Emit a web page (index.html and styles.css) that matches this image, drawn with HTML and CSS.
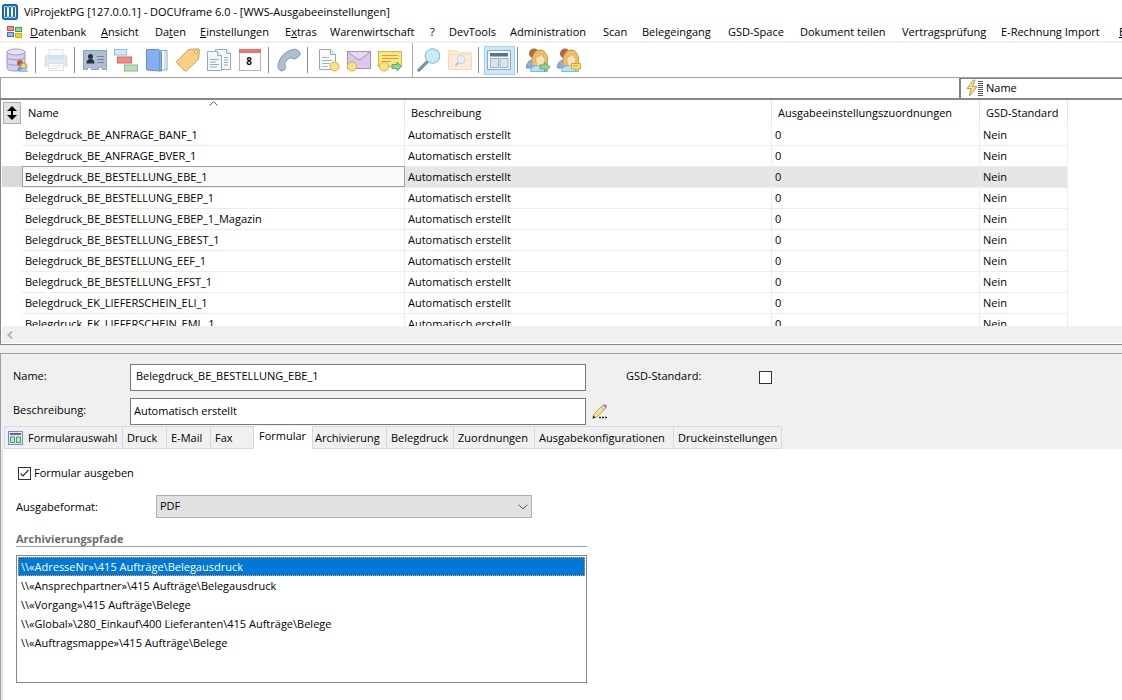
FILE: index.html
```html
<!DOCTYPE html>
<html lang="de">
<head>
<meta charset="utf-8">
<title>ViProjektPG [127.0.0.1] - DOCUframe 6.0 - [WWS-Ausgabeeinstellungen]</title>
<link rel="stylesheet" href="styles.css">
</head>
<body>
<header class="titlebar">
  <svg class="icon16" viewBox="0 0 16 16"><rect x=".5" y=".5" width="15" height="15" rx="2" fill="#1673b8" stroke="#0d5f9e"/><g fill="#1673b8" stroke="#fff" stroke-width="1"><rect x="2.500" y="2.500" width="3" height="11" rx="1"/><rect x="6.500" y="2.500" width="3" height="11" rx="1"/><rect x="10.500" y="2.500" width="3" height="11" rx="1"/></g></svg>
  <h1 class="title">ViProjektPG [127.0.0.1] - DOCUframe 6.0 - [WWS-Ausgabeeinstellungen]</h1>
</header>

<nav class="menubar">
  <svg class="icon16" viewBox="0 0 16 14"><rect x=".5" y="1.500" width="6" height="4" fill="#f58b8b" stroke="#d94a4a"/><rect x="8.500" y="2.500" width="6" height="4" fill="#8fd6a0" stroke="#35a552"/><rect x=".5" y="7.500" width="6" height="4" fill="#8db8f5" stroke="#3b76d0"/><rect x="8.500" y="8.500" width="6" height="4" fill="#f2d50c" stroke="#d1b000"/></svg>
  <a href="#"><u>D</u>atenbank</a><a href="#"><u>A</u>nsicht</a><a href="#">Da<u>t</u>en</a><a href="#"><u>E</u>instellungen</a><a href="#">E<u>x</u>tras</a><a href="#">Warenwirtschaft</a><a href="#">?</a><a href="#">DevTools</a><a href="#">Administration</a><a href="#">Scan</a><a href="#">Belegeingang</a><a href="#">GSD-Space</a><a href="#">Dokument teilen</a><a href="#">Vertragsprüfung</a><a href="#">E-Rechnung Import</a><a href="#"><u>E</u></a>
</nav>

<div class="toolbar" role="toolbar" aria-label="Werkzeuge">
  <button class="tool" aria-label="Datenbank"><svg viewBox="0 0 24 24"><path d="M2 4v16c0 2 4 3 9 3s9-1 9-3V4z" fill="#d9cfec" stroke="#a594c8"/><ellipse cx="11" cy="4" rx="9" ry="3" fill="#e8e1f5" stroke="#a594c8"/><path d="M2 9.500c1 3 17 3 18 0M2 15c1 3 17 3 18 0" fill="none" stroke="#a594c8"/><circle cx="15" cy="15" r="3" fill="#a5683c"/><path d="M12 23c0-5 5-6 6-3l-1 3z" fill="#6da0e8"/><path d="M15 20c-1-7 8-7 7 0z" fill="#e2ae45" stroke="#b98a35" stroke-width=".6"/><circle cx="18.500" cy="18" r="2" fill="#f5d3a0"/><path d="M14.500 23.500c0-4 8-4 8 0z" fill="#9bd0f5" stroke="#6ea8d8" stroke-width=".6"/></svg></button>
  <span class="sep"></span>
  <button class="tool" aria-label="Drucken" disabled><svg viewBox="0 0 24 24"><path d="M5 1.500h14v7H5z" fill="#f7f9fb" stroke="#dfe4ea"/><path d="M1 10q0-2.500 2.500-2.500h17Q23 7.500 23 10v8H1z" fill="#e3e8ee" stroke="#d5dce4"/><path d="M4.500 7.500h15V12h-15z" fill="#cfe4f6"/><path d="M4.500 15.500h15v7h-15z" fill="#fafbfc" stroke="#dbe1e8"/><path d="M7 18h10M7 20.500h7" stroke="#dfe4ea"/></svg></button>
  <span class="sep"></span>
  <button class="tool" aria-label="Adressen"><svg viewBox="0 0 24 24"><path d="M.5 2.500h23v19h-4q0-2.500-2-2.500t-2 2.500h-7q0-2.500-2-2.500t-2 2.500h-4z" fill="#aebfd3" stroke="#8ea3bb"/><circle cx="7.500" cy="8.500" r="2.500" fill="#25323f"/><path d="M3.500 15.500q0-4.500 4-4.500t4 4.500z" fill="#25323f"/><path d="M14 8.500h7M14 11.500h7M14 14.500h7" stroke="#71869e"/></svg></button>
  <button class="tool" aria-label="Vorgänge"><svg viewBox="0 0 24 24"><rect x=".5" y="1.500" width="12" height="5.500" fill="#ccecfc" stroke="#8cbfe0"/><rect x="3.500" y="9" width="14" height="6" fill="#f58888" stroke="#d86565"/><rect x="10.500" y="17" width="13" height="6" fill="#b5e0bd" stroke="#83bb8f"/></svg></button>
  <button class="tool" aria-label="Mappe"><svg viewBox="0 0 24 24"><path d="M12 2.500h10v19.500H15z" fill="#fff" stroke="#8da5c8"/><path d="M20 3v19" stroke="#b4c2d6"/><path d="M1.500 1.500h12l3 2.500v19H15L1.500 22z" fill="#83b0ee" stroke="#5d8ed4"/><path d="M14.500 2v21" stroke="#6797dc"/></svg></button>
  <button class="tool" aria-label="Artikel"><svg viewBox="0 0 24 24"><path d="M12.500 1.500 22 .8q1.500 0 1.500 1.500l-1 9-12 11.500q-1 .7-2-.3L.9 15q-.8-1 .2-2z" fill="#f9ce85" stroke="#cfa052"/><circle cx="20" cy="4" r="1.500" fill="#fff" stroke="#cfa052"/></svg></button>
  <button class="tool" aria-label="Dokumente"><svg viewBox="0 0 24 24"><g fill="#f4f8fb" stroke="#94abc1"><path d="M8.500 1.500h11l4 4v16h-15z"/><path d="M19.500 1.500v4h4M17 9.500h4M17 12h4M17 14.500h4M17 17h4"/><path d="M.5 3.500h10l4 4v15H.5z"/><path d="M10.500 3.500v4h4"/></g><path d="M3 11.500h9M3 14h6M3 16.500h9M3 19h7" stroke="#94abc1"/></svg></button>
  <button class="tool" aria-label="Kalender"><svg viewBox="0 0 24 24"><rect x="1.500" y="1.500" width="21" height="21" fill="#fdfdfd" stroke="#aab6c2"/><path d="M1 1h22v4H1z" fill="#fa6d6d"/><text class="day" x="11" y="17" text-anchor="middle">8</text></svg></button>
  <span class="sep"></span>
  <button class="tool" aria-label="Telefon"><svg viewBox="0 0 24 24"><path d="M17.500 1.200q-7 1.300-11 5.300Q2 11 1 17q-.5 4 2 5.500 2.300 1 4.500-.8 2-2 .5-4.200-1.200-2 1.500-5 3-3.300 5-2.500 2.500 1.700 4.500.5 2.500-1.500 4-3.700.8-2-1.500-4-2-1.600-4-1.600z" fill="#aebfd3" stroke="#8499b1"/></svg></button>
  <span class="sep"></span>
  <button class="tool" aria-label="Neues Dokument"><svg viewBox="0 0 24 24"><path d="M3.500 1.500h11l5 5v15h-16z" fill="#f8fafc" stroke="#94a8bd"/><path d="M14.500 1.500v5h5" fill="#e3ebf3" stroke="#94a8bd"/><path d="M6 9.500h7M6 12.500h10M6 15.500h8M6 18.500h6" stroke="#a5b5c5"/><circle cx="18.500" cy="18.500" r="4.500" fill="#fbe383" stroke="#d3b24a"/></svg></button>
  <button class="tool" aria-label="Neue E-Mail"><svg viewBox="0 0 24 24"><rect x=".5" y="3.500" width="23" height="17" fill="#d8c9ed" stroke="#a58fc8"/><path d="m1 4 9 7q2 1.500 4 0l9-7" fill="#e4d9f3" stroke="#a58fc8"/><circle cx="5" cy="18.500" r="4.500" fill="#fbe383" stroke="#d3b24a"/></svg></button>
  <button class="tool" aria-label="Neue Notiz"><svg viewBox="0 0 24 24"><rect x=".5" y="3.500" width="23" height="15" fill="#fbe67f" stroke="#d3b24a"/><path d="M4 7.500h16M4 10.500h16M4 13.500h9" stroke="#c5a43f"/><circle cx="6" cy="18.500" r="4.500" fill="#fbe383" stroke="#d3b24a"/><path d="M14 16.500h5V14l4.500 4.500L19 23v-2.500h-5z" fill="#8fd19b" stroke="#62a871"/></svg></button>
  <span class="divider"></span>
  <button class="tool" aria-label="Suchen"><svg viewBox="0 0 24 24"><path d="m1 23 10-10" stroke="#647b94" stroke-width="3"/><path d="m2 22 9-9" stroke="#96acc3"/><circle cx="15.500" cy="8" r="7.300" fill="#c6e9fb" stroke="#8facc8"/></svg></button>
  <button class="tool" aria-label="Ordnersuche" disabled><svg viewBox="0 0 24 24"><path d="M.5 2.500h8l1.500 2h13.500v17H.5z" fill="#fdecd3" stroke="#f4dcb8"/><path d="M.5 6.500h23" stroke="#f4dcb8"/><path d="m7.500 17.500 4-4" stroke="#b6c3d0" stroke-width="2"/><circle cx="13" cy="11.500" r="4" fill="#dff2fd" stroke="#c0d8ec"/></svg></button>
  <span class="sep"></span>
  <button class="tool active" aria-label="Formularansicht" aria-pressed="true"><svg viewBox="0 0 24 24"><rect x=".5" y="2.500" width="23" height="19" fill="#f6fafd" stroke="#8fa7bf"/><path d="M3 5h18v3.500H3z" fill="#58728d"/><g fill="#dce5ee" stroke="#9eb1c4"><rect x="3.500" y="10.500" width="8" height="9"/><rect x="13" y="10.500" width="8" height="9"/></g></svg></button>
  <span class="sep"></span>
  <button class="tool" aria-label="Benutzer wechseln"><svg viewBox="0 0 24 24"><circle cx="8" cy="5.500" r="5" fill="#a96a4a"/><path d="M.5 20c0-7 4-8 8-8l3 8z" fill="#81b1f0" stroke="#5e90d6"/><path d="M6 18C5 9 8 2 14 2s9 7 7 16z" fill="#efbd62" stroke="#c9973f"/><path d="M4.500 23.500c0-4 3-6 9-6s8 2 8 6z" fill="#b5e2fa" stroke="#7fb8de"/><path d="M10 9q3 0 6-3 0 3 3 4 0 8-5 8t-4-9z" fill="#fae0bc" stroke="#d5a55c" stroke-width=".7"/><path d="M14 17h4.500v-2.500L24 19l-5.500 4.500V21H14z" fill="#8fd19b" stroke="#62a871"/></svg></button>
  <button class="tool" aria-label="Benutzernotiz"><svg viewBox="0 0 24 24"><circle cx="8" cy="5.500" r="5" fill="#a96a4a"/><path d="M.5 20c0-7 4-8 8-8l3 8z" fill="#81b1f0" stroke="#5e90d6"/><path d="M6 18C5 9 8 2 14 2s9 7 7 16z" fill="#efbd62" stroke="#c9973f"/><path d="M4.500 23.500c0-4 3-6 9-6s8 2 8 6z" fill="#b5e2fa" stroke="#7fb8de"/><path d="M10 9q3 0 6-3 0 3 3 4 0 8-5 8t-4-9z" fill="#fae0bc" stroke="#d5a55c" stroke-width=".7"/><path d="M14.500 15.500h9V21h-3l-2 2v-2h-4z" fill="#fbe06a" stroke="#c9a83d"/><path d="M16.500 18h5" stroke="#c9a83d"/></svg></button>
</div>

<div class="filterbar">
  <input class="filter-input" type="text" aria-label="Filter">
  <button class="filter-field"><svg class="bolt" viewBox="0 0 18 18"><path d="M7.500 1 1 9.500h4L3.500 17 11 7.500H6.500L9 1z" fill="#f7df8d" stroke="#c59b45"/><path d="M12 2.500h5M12 4.500h5M12 6.500h5M12 8.500h5M12 10.500h5M12 12.500h5M12 14.500h5M12 16.500h5" stroke="#555"/></svg>Name</button>
</div>

<main class="workspace">
  <section class="list-pane" aria-label="Ausgabeeinstellungen">
    <div class="list-view">
      <table class="grid">
        <colgroup><col class="c-mark"><col class="c-name"><col class="c-desc"><col class="c-assign"><col class="c-std"><col></colgroup>
        <thead><tr>
          <th class="mark"><button class="sizer" aria-label="Spaltenauswahl"><svg viewBox="0 0 12 14"><path d="M6 0 1 5h4v4H1l5 5 5-5H7V5h4z"/></svg></button></th>
          <th class="sorted">Name<svg class="sort" viewBox="0 0 9 5"><path d="M.5 4.500 4.500.7l4 3.800" fill="none" stroke="#555"/></svg></th><th>Beschreibung</th><th>Ausgabeeinstellungszuordnungen</th><th>GSD-Standard</th><th class="rest"></th>
        </tr></thead>
        <tbody>
          <tr><td></td><td>Belegdruck_BE_ANFRAGE_BANF_1</td><td>Automatisch erstellt</td><td>0</td><td>Nein</td><td></td></tr>
          <tr><td></td><td>Belegdruck_BE_ANFRAGE_BVER_1</td><td>Automatisch erstellt</td><td>0</td><td>Nein</td><td></td></tr>
          <tr class="selected"><td></td><td>Belegdruck_BE_BESTELLUNG_EBE_1</td><td>Automatisch erstellt</td><td>0</td><td>Nein</td><td></td></tr>
          <tr><td></td><td>Belegdruck_BE_BESTELLUNG_EBEP_1</td><td>Automatisch erstellt</td><td>0</td><td>Nein</td><td></td></tr>
          <tr><td></td><td>Belegdruck_BE_BESTELLUNG_EBEP_1_Magazin</td><td>Automatisch erstellt</td><td>0</td><td>Nein</td><td></td></tr>
          <tr><td></td><td>Belegdruck_BE_BESTELLUNG_EBEST_1</td><td>Automatisch erstellt</td><td>0</td><td>Nein</td><td></td></tr>
          <tr><td></td><td>Belegdruck_BE_BESTELLUNG_EEF_1</td><td>Automatisch erstellt</td><td>0</td><td>Nein</td><td></td></tr>
          <tr><td></td><td>Belegdruck_BE_BESTELLUNG_EFST_1</td><td>Automatisch erstellt</td><td>0</td><td>Nein</td><td></td></tr>
          <tr><td></td><td>Belegdruck_EK_LIEFERSCHEIN_ELI_1</td><td>Automatisch erstellt</td><td>0</td><td>Nein</td><td></td></tr>
          <tr><td></td><td>Belegdruck_EK_LIEFERSCHEIN_EML_1</td><td>Automatisch erstellt</td><td>0</td><td>Nein</td><td></td></tr>
        </tbody>
      </table>
    </div>
    <div class="hscroll"><button class="scroll-left" aria-label="Nach links"><svg viewBox="0 0 8 8"><path d="M6 .5 2.500 4 6 7.500" fill="none" stroke="#b5b5b5" stroke-width="2"/></svg></button></div>
  </section>

  <section class="detail">
    <div class="fields">
      <label for="name">Name:</label>
      <input class="field-name" id="name" type="text" value="Belegdruck_BE_BESTELLUNG_EBE_1">
      <label class="std-label" for="std">GSD-Standard:</label>
      <input class="check" id="std" type="checkbox">
      <label for="desc">Beschreibung:</label>
      <input id="desc" type="text" value="Automatisch erstellt">
      <button class="edit" aria-label="Bearbeiten"><svg viewBox="0 0 16 16"><path d="m1 14 1-4 8.500-8.500 3 3L5 13z" fill="#f8e08a" stroke="#b89445" stroke-width=".8"/><path d="m9 3 2-2 3 3-2 2z" fill="#c8d8e8" stroke="#8597a8" stroke-width=".6"/><path d="m11 1 1-.7q3 0 3 3L14 4z" fill="#e86e6e"/><path d="m.5 14.500.7-3 2.300 2.300z" fill="#222"/><path d="M7 13.500h2M10 13.500h2M13 13.500h2" stroke="#222" stroke-width="1.500"/></svg></button>
    </div>

    <div class="tabs" role="tablist">
      <button class="tab with-icon" role="tab"><svg viewBox="0 0 15 14"><rect x=".5" y=".5" width="14" height="13" fill="#d8e9fb" stroke="#5f94cf"/><path d="M2 2h11v2H2z" fill="#7d5c9c"/><path d="M2.500 6h4v5.500h-4zM8.500 6h4v5.500h-4z" fill="#bfe5c4" stroke="#4c9b62"/></svg>Formularauswahl</button><button class="tab" role="tab">Druck</button><button class="tab" role="tab">E-Mail</button><button class="tab" role="tab">Fax</button><button class="tab current" role="tab" aria-selected="true">Formular</button><button class="tab" role="tab">Archivierung</button><button class="tab" role="tab">Belegdruck</button><button class="tab" role="tab">Zuordnungen</button><button class="tab" role="tab">Ausgabekonfigurationen</button><button class="tab" role="tab">Druckeinstellungen</button>
    </div>

    <div class="page" role="tabpanel">
      <label class="output"><input class="check" type="checkbox" checked>Formular ausgeben</label>
      <div class="format-row">
        <label for="format">Ausgabeformat:</label>
        <div class="select-box"><select id="format"><option>PDF</option></select><svg class="chevron" viewBox="0 0 10 6"><path d="m.7.700 4.300 4.300L9.300.700" fill="none" stroke="#555"/></svg></div>
      </div>
      <h2 class="group">Archivierungspfade</h2>
      <ul class="paths" role="listbox" aria-label="Archivierungspfade">
        <li class="chosen" role="option" aria-selected="true">\\«AdresseNr»\415 Aufträge\Belegausdruck</li>
        <li role="option">\\«Ansprechpartner»\415 Aufträge\Belegausdruck</li>
        <li role="option">\\«Vorgang»\415 Aufträge\Belege</li>
        <li role="option">\\«Global»\280_Einkauf\400 Lieferanten\415 Aufträge\Belege</li>
        <li role="option">\\«Auftragsmappe»\415 Aufträge\Belege</li>
      </ul>
    </div>
  </section>
</main>
</body>
</html>
```
FILE: styles.css
```css
* { box-sizing: border-box; }
body {
  margin: 0;
  height: 100vh;
  display: flex;
  flex-direction: column;
  overflow: hidden;
  background: #fff;
  color: #000;
  font: 11px/16px "Open Sans", "Noto Sans", sans-serif;
}
button, input, select { font: inherit; color: inherit; margin: 0; border-radius: 0; }
button { padding: 0; border: 0; background: none; }
svg { display: block; flex: none; }
.icon16 { width: 16px; }

.titlebar { display: flex; align-items: center; gap: 6px; height: 22px; padding: 1px 0 0 2px; flex: none; }
.title { margin: 0; font-size: 11px; font-weight: 400; }

.menubar {
  display: grid;
  grid-template-columns: 23px 71px 54px 45px 85px 45px 100px 19px 61px 93px 39px 86px 72px 102px 99px 118px 20px;
  align-items: center;
  height: 21px;
  padding: 1px 0 0 7px;
  border-bottom: 2px solid #f0f0f0;
  flex: none;
  white-space: nowrap;
}
.menubar a { color: inherit; text-decoration: none; }

.toolbar { display: flex; align-items: center; height: 34px; padding-left: 2px; flex: none; }
.tool { width: 31px; height: 29px; display: grid; place-items: center start; padding-left: 2px; border: 1px solid transparent; flex: none; }
.tool svg { width: 24px; height: 24px; }
.tool.active { background: #cce8ff; border-color: #99d1ff; }
.sep { width: 1px; height: 26px; margin: 0 5px 0 2px; background: #8a8a8a; flex: none; }
.divider { width: 1px; height: 34px; margin: 0 1px 0 6px; background: #a8a8a8; flex: none; }
.day { font: 700 10px "Open Sans", sans-serif; fill: #111; }

.filterbar { display: flex; height: 23px; border-top: 1px solid #a0a0a0; border-bottom: 2px solid #85878c; flex: none; }
.filter-input { flex: 1; min-width: 0; border: 0; border-left: 1px solid #a0a0a0; outline: 0; }
.filter-field { display: flex; align-items: center; gap: 2px; width: 163px; padding: 0 0 2px 5px; border-left: 2px solid #828282; border-top: 1px solid #828282; flex: none; }
.bolt { width: 18px; height: 18px; }

.workspace { flex: 1; min-height: 0; display: flex; flex-direction: column; gap: 8px; background: #f0f0f0; }
.list-pane { height: 35vh; display: flex; flex-direction: column; background: #fff; border-left: 1px solid #828790; border-bottom: 1px solid #828790; padding: 0 0 1px 1px; flex: none; }
.list-view { flex: 1; min-height: 0; overflow: hidden; }
.grid { width: 100%; table-layout: fixed; border-collapse: separate; border-spacing: 0; }
.c-mark { width: 20px; }
.c-name { width: 383px; }
.c-desc { width: 367px; }
.c-assign { width: 208px; }
.c-std { width: 88px; }
.grid th { height: 24px; padding: 1px 0 0 6px; font-weight: 400; text-align: left; border-right: 1px solid #e5e5e5; white-space: nowrap; }
.grid .mark { padding: 0; border: 0; }
.grid .rest { border: 0; }
.sorted { position: relative; }
.sort { position: absolute; left: 49%; top: 1px; width: 9px; height: 5px; }
.sizer { display: grid; place-items: center; width: 18px; height: 22px; margin: 1px 0 0 1px; background: #e1e1e1; border: 1px solid #adadad; }
.sizer svg { width: 12px; height: 14px; }
.grid td { height: 21px; padding: 0 0 0 3px; border-right: 1px solid #ededed; border-top: 1px solid #ededed; white-space: nowrap; line-height: 18px; }
.grid td:first-child, .grid td:last-child { border-color: transparent; }
.grid td:first-child { border-right: 0; }
.grid tbody tr:first-child td { border-top-color: transparent; }
.selected td { background: #e6e6e6; }
.selected td:first-child { background: #d9d9d9; }
.grid .selected td:nth-child(2) { background: #f9f9f9; border: 1px solid #a0a0a0; padding-left: 2px; }
.grid .selected td:last-child { background: none; }
.hscroll { display: flex; align-items: center; height: 17px; background: #f0f0f0; flex: none; }
.scroll-left { width: 15px; display: grid; place-items: center; }
.scroll-left svg { width: 8px; height: 8px; }

.detail { flex: 1; min-height: 0; display: flex; flex-direction: column; border-left: 1px solid #a0a0a0; border-top: 1px solid #a0a0a0; }
.fields {
  display: grid;
  grid-template-columns: 117px 456px 40px 133px 1fr;
  row-gap: 7px;
  align-items: center;
  padding: 10px 0 1px 12px;
}
.fields label { padding-bottom: 3px; }
.fields input[type="text"] { width: 100%; height: 27px; padding: 0 3px 3px; border: 1px solid #7a7a7a; background: #fff; outline: 0; }
.fields input.field-name { padding: 0 5px 5px; }
.fields .std-label { grid-column: 4; }
.edit { margin-left: 6px; justify-self: start; }
.edit svg { width: 16px; height: 16px; }
.check { appearance: none; width: 13px; height: 13px; border: 1px solid #333; background: #fff; flex: none; }
.check:checked { background: #fff url("data:image/svg+xml,%3Csvg xmlns='http://www.w3.org/2000/svg' viewBox='0 0 11 11'%3E%3Cpath d='m1.500 5.500 2.500 2.500 5.500-6' fill='none' stroke='%23333' stroke-width='1.200'/%3E%3C/svg%3E"); }

.tabs {
  display: grid;
  grid-template-columns: 119px 44px 44px 43px 59px 74px 67px 81px 139px 108px;
  height: 23px;
  margin-left: 3px;
  flex: none;
}
.tab { border: 1px solid #d9d9d9; border-left: 0; padding-left: 4px; text-align: left; white-space: nowrap; background: #f0f0f0; }
.with-icon { display: flex; align-items: center; gap: 5px; border-left: 1px solid #d9d9d9; padding-left: 3px; }
.with-icon svg { width: 15px; height: 14px; }
.tab.current { background: #fff; border-top: 0; border-bottom: 0; padding: 0 0 4px 5px; }
.current + .tab { padding-left: 2px; }

.page { flex: 1; margin-left: 1px; padding: 16px 13px; border-left: 1px solid #d9d9d9; background: #fff; }
.output { display: flex; align-items: center; gap: 3px; margin-left: 2px; }
.format-row { display: flex; align-items: center; margin-top: 14px; }
.format-row label { width: 140px; }
.select-box { display: grid; align-items: center; width: 376px; }
.select-box select { grid-area: 1 / 1; width: 100%; height: 23px; appearance: none; padding: 0 3px 1px; border: 1px solid #adadad; background: #e1e1e1; }
.chevron { grid-area: 1 / 1; justify-self: end; width: 10px; height: 6px; margin-right: 4px; pointer-events: none; }
.group { width: 571px; margin: 13px 0 8px; border-bottom: 1px solid #a0a0a0; color: #6d6d6d; font-size: 11px; line-height: 15px; font-weight: 700; }
.paths { width: 571px; min-height: 128px; margin: 0; padding: 1px; border: 1px solid #828790; list-style: none; }
.paths li { height: 19px; padding: 0 2px; border: 1px solid transparent; line-height: 17px; }
.paths .chosen { background: #0078d7; color: #fff; border: 1px dotted #f0a050; }
```
